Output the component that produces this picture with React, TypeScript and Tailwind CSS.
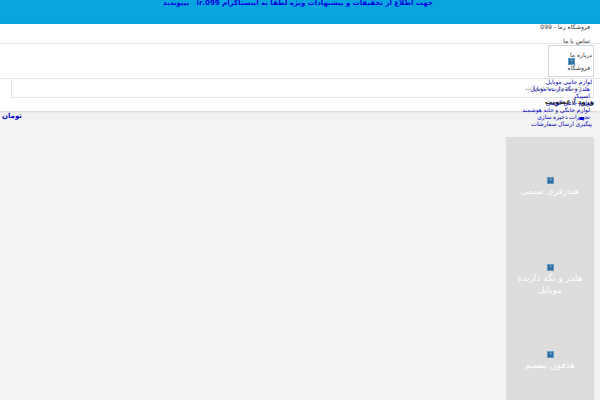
const MENU = [
  "لوازم جانبی موبایل",
  "هلدر و نگه دارنده موبایل",
  "اسپیکر",
  "لوازم جانبی گوشی",
  "لوازم خانگی و خانه هوشمند",
  "تجهیزات ذخیره سازی",
  "پیگیری ارسال سفارشات",
];

const CATEGORIES = ["هندزفری سیمی", "هلدر و نگه دارنده موبایل", "هدفون بیسیم"];

/** Small blue tile shown in place of an image. */
function Placeholder() {
  return (
    <svg viewBox="0 0 7 7" className="block h-[7px] w-[7px]" aria-hidden="true">
      <rect width="7" height="7" fill="#5f9dca" />
      <rect x="1" y="1" width="5" height="5" fill="#27679d" />
      <path d="M2.3 2.5Q3.5 1.3 4.6 2.4Q4.8 3.2 3.5 3.8M3.5 4.7V5.3" fill="none" stroke="#9ccbee" strokeWidth=".8" />
    </svg>
  );
}

function Header() {
  return (
    <header className="relative h-[87px] bg-white shadow-sm">
      <nav className="flex h-5 flex-col items-start border-b border-gray-200 pr-[10px] text-[6px] leading-[14px] text-[#333]">
        <a href="#home" className="-mt-1">فروشگاه رما - 099</a>
        <a href="#contact">تماس با ما</a>
      </nav>

      <div className="flex h-[35px] items-start border-b border-gray-200 px-[6px] pt-px">
        <div className="relative flex h-8 w-[46px] items-center justify-center border border-gray-300">
          <Placeholder />
          <a href="#about" className="absolute top-[5px] right-px whitespace-nowrap text-[6px] leading-[8px] text-[#333]">
            درباره ما
          </a>
          <a href="#shop" className="absolute right-[3px] bottom-1 whitespace-nowrap text-[6px] leading-[8px] text-[#333]">
            فروشگاه
          </a>
        </div>
      </div>

      <form className="mr-[6px] ml-[11px]">
        <input
          type="search"
          aria-label="جستجوی محصولات"
          placeholder="جستجوی محصولات"
          className="block h-[19px] w-full border border-t-0 border-gray-200 pr-[11px] text-[7px] outline-none placeholder:text-[#aaa]"
        />
      </form>
      <a href="#login" className="absolute top-[73px] right-[6px] font-['Noto_Sans','DejaVu_Sans',sans-serif] text-[7px] leading-[10px] font-bold text-[#222]">
        ورود / عضویت
      </a>

      {/* Expanded menu hangs over the search row */}
      <ul className="absolute top-[55px] right-2 font-['Liberation_Serif','DejaVu_Sans',serif] text-[6px] leading-[7px] text-[#0000bb]">
        {MENU.map((item, i) => (
          <li key={item} className={i % 3 === 0 ? "" : "pr-[2px]"}>
            <a href="#menu">{item}</a>
          </li>
        ))}
      </ul>
      <span className="absolute top-[93px] right-4 h-[3px] w-[5px] rounded-full bg-[#0000dd]" />
    </header>
  );
}

export default function App() {
  return (
    <div
      dir="rtl"
      className="h-screen overflow-hidden bg-[#f3f3f3] font-['DejaVu_Sans','Noto_Sans',sans-serif]"
    >
      <div className="h-6 bg-[#08a5e3] pr-1 text-center text-[7px] leading-[7px] font-bold">
        <a href="#instagram" className="text-[#0000dd]">
          جهت اطلاع از تخفیفات و پیشنهادات ویژه لطفا به اینستاگرام 099.ir &nbsp; بپیوندید
        </a>
      </div>
      <Header />
      <div className="flex h-[26px] justify-end pl-[2px]">
        <a href="#cart" className="text-[7px] leading-[10px] font-black text-[#0000cc]">تومان</a>
      </div>
      <main className="flex px-[6px]">
        <section className="w-[88px] bg-[#dcdcdc] pb-3">
          {CATEGORIES.map((name) => (
            <a
              key={name}
              href="#category"
              className="flex h-[87px] flex-col items-center px-1 pt-10 text-center text-[9px] leading-3 text-white"
            >
              <Placeholder />
              <span className="mt-px">{name}</span>
            </a>
          ))}
        </section>
      </main>
    </div>
  );
}
